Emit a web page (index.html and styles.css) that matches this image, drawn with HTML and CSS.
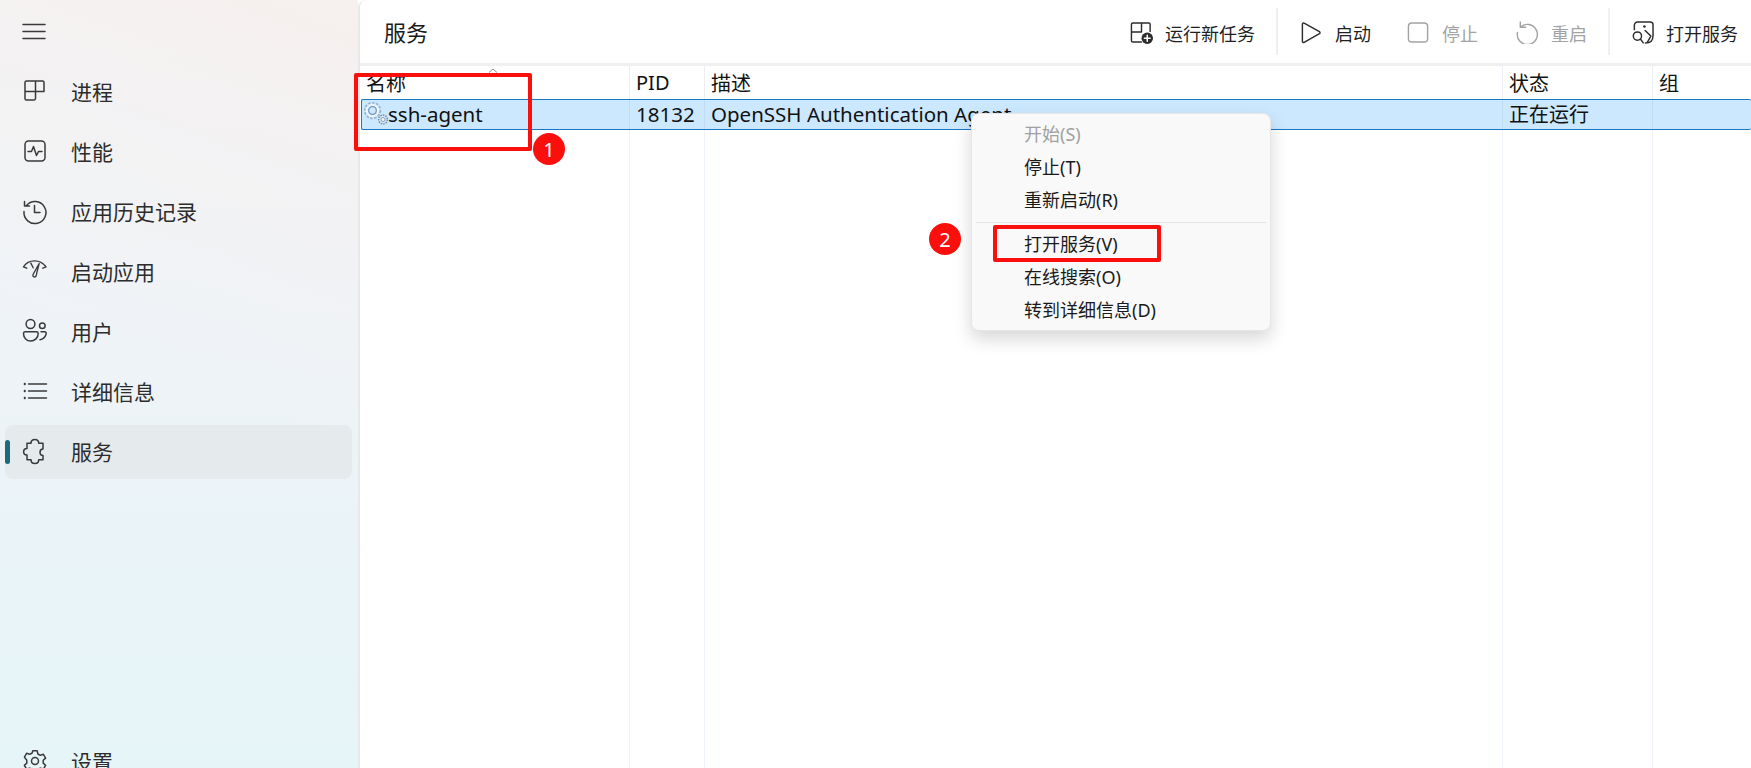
FILE: index.html
```html
<!DOCTYPE html>
<html lang="zh-CN">
<head>
<meta charset="utf-8">
<title>服务</title>
<link rel="stylesheet" href="styles.css">
</head>
<body>
<div class="app">
  <aside class="sidebar">
    <div class="menu-btn">
      <svg class="icon" viewBox="0 0 24 24"><path d="M1 4.500h22M1 11.500h22M1 18.500h22"/></svg>
    </div>
    <nav class="nav">
      <a class="nav-item"><svg class="icon" viewBox="0 0 24 24"><path d="M12.500 12.500h8.500v-9a1.500 1.500 0 0 0-1.500-1.500H3.500a1.500 1.500 0 0 0-1.500 1.500v16a1.500 1.500 0 0 0 1.500 1.500h7.500a1.500 1.500 0 0 0 1.500-1.500V2M2 12.500h10.500"/></svg><span>进程</span></a>
      <a class="nav-item"><svg class="icon" viewBox="0 0 24 24"><rect x="2" y="2" width="20" height="20" rx="3.500"/><path d="M5 12.500h3.500l2-5 3 9 2-4h3.500"/></svg><span>性能</span></a>
      <a class="nav-item"><svg class="icon" viewBox="0 0 24 24"><path d="M3.500 6.500A11 11 0 1 1 1 12.500M1.500 2.500v4.500h5M11.500 6.500v7h5.500"/></svg><span>应用历史记录</span></a>
      <a class="nav-item"><svg class="icon" viewBox="0 0 26 26"><path d="M.5 8.500C3 4.500 7 2 12.500 2S22 4.500 25 8.500M.5 8.500L4 10M25 8.500L21.500 10M8.500 4.500l2.500 5M17.500 5L11 16.500c-1.200 2.500 1.300 4 3 2.300z"/></svg><span>启动应用</span></a>
      <a class="nav-item"><svg class="icon" viewBox="0 2 24 24"><circle cx="7.500" cy="7" r="4.400"/><circle cx="19.300" cy="8.700" r="2.800"/><path d="M2 14.700h11.500a1.700 1.700 0 0 1 1.700 1.700c0 4.500-3.500 7.600-7.500 7.600S.5 21 .5 16.400a1.700 1.700 0 0 1 1.500-1.700zM18 14.700h3.500c1.500 0 2 1 1.500 2.500-.8 3-3 5-6 5.500"/></svg><span>用户</span></a>
      <a class="nav-item"><svg class="icon" viewBox="0 0 24 24"><path d="M5.500 5h18M5.500 12h18M5.500 19h18"/><path class="dots" d="M1.500 4.500h.5v1h-.5zM1.500 11.500h.5v1h-.5zM1.500 18.500h.5v1h-.5z"/></svg><span>详细信息</span></a>
      <a class="nav-item active"><svg class="icon" viewBox="0 0 24 24"><path d="M4 4.300H8c0-5 7.700-5 7.700 0H20V10c-4 0-4 6.500 0 6.500v4.200H15.700c0 5-7.700 5-7.700 0H4V16c-4.500 0-4.500-6.500 0-6.500z"/></svg><span>服务</span></a>
    </nav>
    <a class="nav-item settings"><svg class="icon" viewBox="0 0 24 24"><circle cx="12" cy="12" r="3.500"/><path d="M9.800 1.800h4.400l.7 3.200 2.400 1.300 3.100-1 2.200 3.800-2.400 2.200v2.800l2.400 2.200-2.200 3.800-3.100-1-2.400 1.300-.7 3.200H9.800l-.7-3.200-2.400-1.300-3.100 1-2.200-3.800 2.400-2.200v-2.800L1.400 8.100l2.200-3.800 3.100 1 2.400-1.300z"/></svg><span>设置</span></a>
  </aside>

  <main class="panel">
    <header class="toolbar">
      <h1 class="title">服务</h1>
      <div class="actions">
        <div class="group first">
          <button class="tool"><svg class="tool-icon" viewBox="0 0 24 24"><path d="M12 22H3A1.500 1.500 0 0 1 1.500 20.500V3.500A1.500 1.500 0 0 1 3 2H19.500A1.500 1.500 0 0 1 21 3.500V11M1.500 11.500H12V2"/><circle class="solid" cx="18" cy="18" r="6"/><path class="plus" d="M18 15v6M15 18h6"/></svg><span>运行新任务</span></button>
        </div>
        <i class="divider"></i>
        <div class="group">
          <button class="tool"><svg class="tool-icon" viewBox="0 0 24 24"><path d="M2.500 3.200c0-1 1-1.500 1.800-1l16 9c.8.500.8 1.500 0 2l-16 9c-.8.500-1.800 0-1.800-1z"/></svg><span>启动</span></button>
          <button class="tool off"><svg class="tool-icon" viewBox="0 0 24 24"><rect x="1.500" y="2" width="20" height="20" rx="3.500"/></svg><span>停止</span></button>
          <button class="tool off restart"><svg class="tool-icon" viewBox="0 0 24 24"><path d="M4.500 1v5.500H10M4.500 6.500A10.500 10.500 0 1 1 1.500 12"/></svg><span>重启</span></button>
        </div>
        <i class="divider"></i>
        <div class="group last">
          <button class="tool"><svg class="tool-icon" viewBox="0 0 24 24"><path d="M3.500 9V4.500A3.500 3.500 0 0 1 7 1H20A3 3 0 0 1 23 4V15C23 20 20 23 15 23M14.700 10L20.700 15.700 17.300 21.700"/><circle cx="6.700" cy="15.700" r="4.300"/><path d="M9.800 18.800l3 4"/><circle class="solid" cx="14" cy="5.700" r="1.300"/></svg><span>打开服务</span></button>
        </div>
      </div>
    </header>

    <section class="table">
      <div class="row head">
        <div class="cell name-head">名称<svg class="caret" viewBox="0 0 10 5"><path d="M1 4.500L5 1l4 3.500"/></svg></div>
        <div class="cell">PID</div>
        <div class="cell">描述</div>
        <div class="cell">状态</div>
        <div class="cell">组</div>
      </div>
      <div class="row selected">
        <div class="cell name-cell latin">
          <svg class="gear-icon" viewBox="0 0 24 24">
            <circle class="teeth" cx="8.500" cy="8.500" r="7.800"/>
            <circle class="rim" cx="8.500" cy="8.500" r="5.800"/>
            <circle class="hub" cx="8.500" cy="8.500" r="3.800"/>
            <circle class="teeth small" cx="19" cy="17.500" r="4.400"/>
            <circle class="hub small" cx="19" cy="17.500" r="2"/>
          </svg>ssh-agent
        </div>
        <div class="cell latin">18132</div>
        <div class="cell latin">OpenSSH Authentication Agent</div>
        <div class="cell">正在运行</div>
        <div class="cell"></div>
      </div>
      <div class="row filler">
        <div class="cell"></div><div class="cell"></div><div class="cell"></div><div class="cell"></div><div class="cell"></div>
      </div>
    </section>
  </main>

  <div class="context">
    <div class="ctx-item disabled">开始(S)</div>
    <div class="ctx-item">停止(T)</div>
    <div class="ctx-item">重新启动(R)</div>
    <div class="ctx-sep"></div>
    <div class="ctx-item">打开服务(V)</div>
    <div class="ctx-item">在线搜索(O)</div>
    <div class="ctx-item">转到详细信息(D)</div>
  </div>

  <div class="mark mark-one"></div>
  <div class="badge badge-one">1</div>
  <div class="mark mark-two"></div>
  <div class="badge badge-two">2</div>
</div>
</body>
</html>
```

FILE: styles.css
```css
* { box-sizing: border-box; }
html, body { margin: 0; height: 100%; overflow: hidden; }
body {
  font-family: "Noto Sans", "Noto Sans CJK SC", sans-serif;
  color: #1a1a1a;
  background: #fff;
}
.app {
  position: relative;
  display: flex;
  width: 1751px;
  height: 768px;
  overflow: hidden;
}

/* sidebar */
.sidebar {
  width: 358px;
  flex: none;
  height: 768px;
  display: flex;
  flex-direction: column;
  padding: 5px 0 0 5px;
  background:
    linear-gradient(200deg, rgba(246,240,238,1) 0%, rgba(244,241,241,.6) 22%, rgba(240,244,248,0) 50%),
    linear-gradient(180deg, #f3f4f6 0%, #eff3f7 40%, #eaf4f8 70%, #e6f5f7 100%);
}
.menu-btn {
  height: 54px;
  display: flex;
  align-items: center;
  padding-left: 17px;
}
.icon {
  width: 24px;
  height: 24px;
  flex: none;
  overflow: visible;
  fill: none;
  stroke: #3a3a3a;
  stroke-width: 1.500;
  stroke-linejoin: round;
  stroke-linecap: round;
}
.dots { stroke-width: 1.500; fill: #3a3a3a; }
.nav {
  display: flex;
  flex-direction: column;
  gap: 6px;
  margin-top: 6px;
  width: 347px;
}
.nav-item {
  position: relative;
  height: 54px;
  display: flex;
  align-items: center;
  gap: 24px;
  padding: 0 0 2px 18px;
  font-size: 21px;
  color: #2c2c2c;
  border-radius: 8px;
}
.nav-item.active { background: #e5eaed; }
.nav-item.active::before {
  content: "";
  position: absolute;
  left: 0;
  top: 15px;
  width: 5px;
  height: 24px;
  border-radius: 3px;
  background: #1b6b7d;
}
.settings { margin-top: auto; margin-bottom: -21px; }

/* main panel */
.panel {
  flex: 1;
  min-width: 0;
  display: flex;
  flex-direction: column;
  background: #fff;
  border-left: 2px solid #e6e8e9;
  border-top-left-radius: 8px;
}
.toolbar {
  height: 66px;
  flex: none;
  display: flex;
  align-items: center;
  justify-content: space-between;
  border-bottom: 3px solid #f0f0f0;
  padding-left: 24px;
}
.title {
  margin: 0;
  padding-bottom: 2px;
  font-size: 22px;
  font-weight: 400;
  color: #1a1a1a;
}
.actions {
  display: flex;
  align-items: center;
  height: 47px;
}
.group {
  display: flex;
  align-items: center;
  gap: 36px;
  padding: 2px 21px 0 22px;
}
.group.first { padding-right: 21px; }
.group.last { padding: 2px 13px 0 21px; }
.tool {
  display: flex;
  align-items: center;
  gap: 12px;
  border: 0;
  padding: 0;
  background: none;
  font: inherit;
  font-size: 18px;
  color: #1f1f1f;
}
.tool.restart { margin-left: 2px; }
.tool-icon {
  width: 23px;
  height: 23px;
  flex: none;
  fill: none;
  stroke: #2c2c2c;
  stroke-width: 1.500;
  stroke-linejoin: round;
  stroke-linecap: round;
}
.tool-icon .solid { fill: #2c2c2c; stroke: none; }
.tool-icon .plus { stroke: #fff; stroke-width: 1.600; }
.tool.off { color: #a3a3a3; }
.tool.off .tool-icon { stroke: #a3a3a3; }
.divider {
  width: 2px;
  height: 47px;
  flex: none;
  background: #efefef;
}

/* table */
.table {
  flex: 1;
  display: flex;
  flex-direction: column;
  min-height: 0;
}
.row {
  display: grid;
  grid-template-columns: 270px 75px 798px 150px 1fr;
}
.cell {
  padding-left: 6px;
  display: flex;
  align-items: center;
  border-right: 1px solid #ebeef4;
  font-size: 20px;
  color: #111;
  white-space: nowrap;
  overflow: hidden;
}
.cell.latin { font-size: 20.500px; }
.cell:last-child { border-right: 0; }
.head { height: 33px; }
.name-head { position: relative; overflow: visible; }
.caret {
  position: absolute;
  left: 128px;
  top: 2px;
  width: 10px;
  height: 5px;
  fill: none;
  stroke: #8a8a8a;
  stroke-width: 1;
}
.selected {
  height: 31px;
  margin-left: 1px;
  grid-template-columns: 268px 75px 798px 150px 1fr;
  background: #cce8ff;
  border: 1px solid #1a78c2;
  border-right: 0;
  border-radius: 2px;
}
.selected .cell { border-right-color: #c3dcf2; padding-bottom: 2px; }
.selected .name-cell { padding-left: 2px; gap: 0; }
.gear-icon { width: 24px; height: 24px; flex: none; }
.gear-icon circle { fill: none; }
.gear-icon .teeth { stroke: #9ab6d2; stroke-width: 2; stroke-dasharray: 2.500 1.500; }
.gear-icon .rim { stroke: #eef5fb; stroke-width: 2; }
.gear-icon .hub { fill: #d3e7f8; stroke: #6f9cc8; stroke-width: 1.300; }
.gear-icon .teeth.small { stroke: #7f8e9c; stroke-width: 1.500; stroke-dasharray: 1.500 1; }
.gear-icon .hub.small { fill: #f2f5f8; stroke: #7f8e9c; stroke-width: .8; }
.filler { flex: 1; }
.filler .cell { border-right-color: #eef2fa; }

/* context menu */
.context {
  position: absolute;
  left: 971px;
  top: 113px;
  width: 300px;
  height: 218px;
  padding: 4px;
  background: #f9f9f9;
  border: 1px solid #e6e6e6;
  border-radius: 8px;
  box-shadow: 0 8px 18px rgba(0, 0, 0, .16);
}
.ctx-item {
  height: 33.300px;
  padding: 0 0 4px 48px;
  display: flex;
  align-items: center;
  font-size: 18px;
  color: #1a1a1a;
}
.ctx-item.disabled { color: #a0a0a0; }
.ctx-sep {
  height: 1px;
  margin: 4px 0 5px;
  background: #e3e3e3;
}

/* annotations */
.mark {
  position: absolute;
  border: 4px solid #fb0f0c;
  border-radius: 2px;
}
.mark-one { left: 354px; top: 73px; width: 178px; height: 78px; }
.mark-two { left: 993px; top: 225px; width: 168px; height: 37px; }
.badge {
  position: absolute;
  width: 32px;
  height: 32px;
  border-radius: 50%;
  background: #fb0f0c;
  color: #fff;
  font-size: 20px;
  display: flex;
  align-items: center;
  justify-content: center;
}
.badge-one { left: 533px; top: 133px; }
.badge-two { left: 929px; top: 223px; }
```
